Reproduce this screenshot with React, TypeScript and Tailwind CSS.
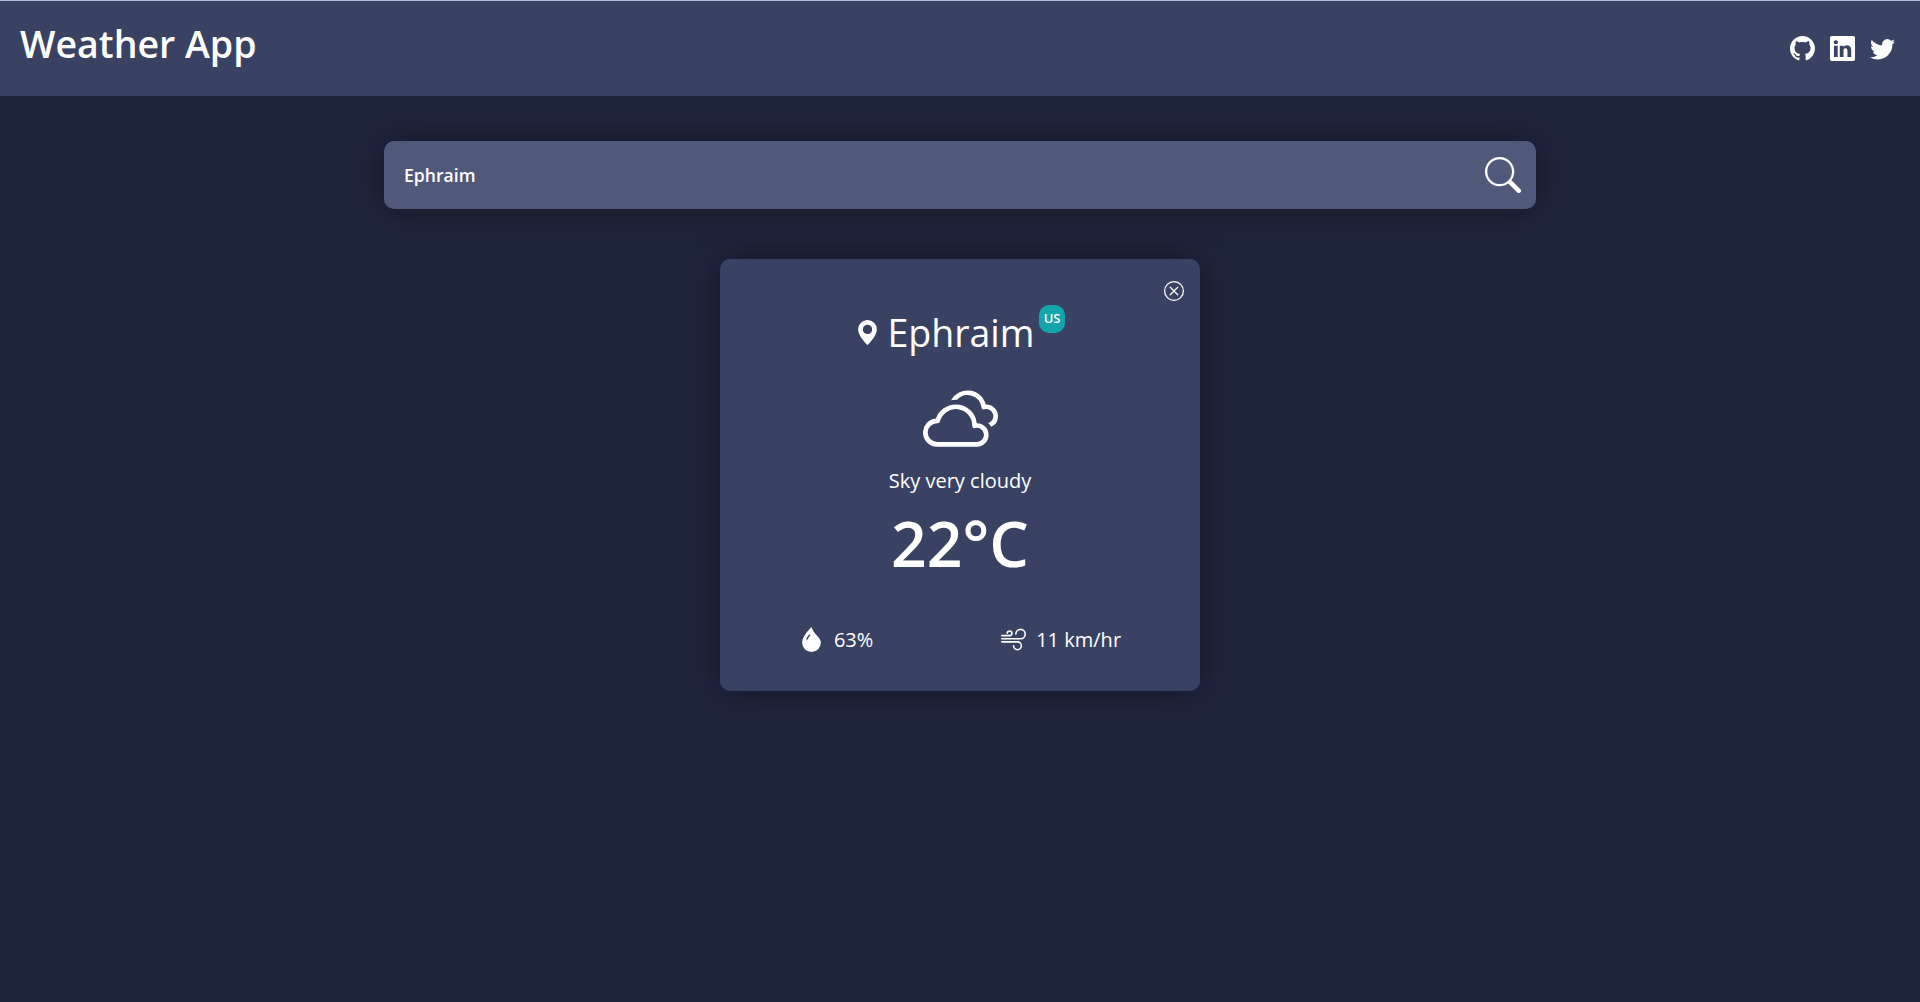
import React from 'react';
import { BsGithub, BsLinkedin, BsTwitter, BsSearch, BsXCircle, BsGeoAltFill, BsDropletFill, BsClouds, BsWind } from 'react-icons/bs';

export default function App() {
  return (
    <div className="min-h-screen bg-[#20253e] font-['Open_Sans',sans-serif] text-white">
      <header className="flex h-24 justify-between border-t border-[#b4bedb] bg-[#3a4264] pl-5 pr-[25px]">
        <h1 className="mt-4 text-[37.5px] leading-[54px] font-semibold">Weather App</h1>
        <nav className="mt-[35px] flex gap-[15px] text-[25px]">
          <BsGithub />
          <BsLinkedin />
          <BsTwitter />
        </nav>
      </header>
      <main className="flex flex-col items-center pt-[45px]">
        <div className="flex h-[68px] w-3/5 items-center justify-between rounded-[10px] bg-[#51597b] pr-[15px] pl-5 shadow-[0_0_35px_rgba(0,0,0,0.4)]">
          <span className="text-[17.6px] font-semibold">Ephraim</span>
          <BsSearch className="size-9 stroke-[0.05]" />
        </div>
        <section className="relative mt-[50px] flex h-[432px] w-[480px] flex-col items-center rounded-[10px] bg-[#3a4264] pt-[45px] shadow-[0_0_35px_rgba(0,0,0,0.4)]">
          <BsXCircle className="absolute top-[22px] right-4 size-5" />
          <div className="flex h-[56px] items-center">
            <BsGeoAltFill className="size-[25px]" />
            <h2 className="mt-[2px] ml-[7px] text-[37.5px]">Ephraim</h2>
            <span className="mb-[26px] ml-1 flex h-7 w-[26px] items-center justify-center rounded-[10px] bg-[#14a5aa] pl-px text-[13px] font-semibold">US</span>
          </div>
          <BsClouds className="mt-[21px] size-[75px]" />
          <p className="mt-[10px] text-xl leading-[30px]">Sky very cloudy</p>
          <p className="mt-[7px] text-[62.5px] leading-[80px] font-semibold">22°C</p>
          <div className="mt-[42px] flex w-full justify-around px-[15px] text-xl">
            <div className="flex items-center gap-[10px]">
              <BsDropletFill className="size-[25px]" />
              <span className="pt-px leading-7">63%</span>
            </div>
            <div className="flex items-center gap-[10px]">
              <BsWind className="size-[25px]" />
              <span className="pt-px leading-7">11 km/hr</span>
            </div>
          </div>
        </section>
      </main>
    </div>
  );
}
